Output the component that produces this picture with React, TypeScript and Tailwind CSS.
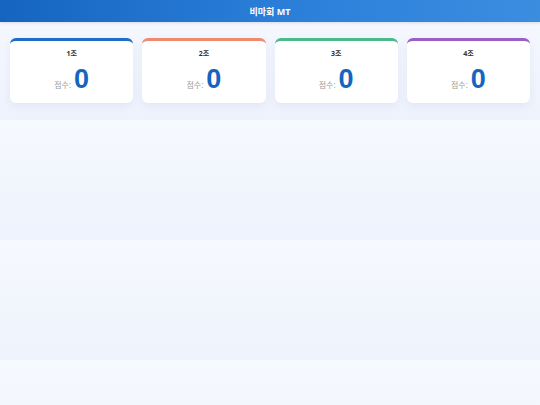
import React from "react";

const teams = [
  { name: "1조", border: "border-t-[#1e6ec8]" },
  { name: "2조", border: "border-t-[#ef8a6f]" },
  { name: "3조", border: "border-t-[#4cb98a]" },
  { name: "4조", border: "border-t-[#9a5fc2]" },
];

export default function App() {
  return (
    <div
      className="min-h-[405px] w-full bg-[linear-gradient(180deg,#f6f9fe_0%,#eef2fc_100%)] bg-[length:100%_120px] bg-repeat-y"
      style={{ fontFamily: '"Noto Sans", "Noto Sans CJK KR", sans-serif' }}
    >
      <header className="h-[22px] flex items-center justify-center bg-[linear-gradient(90deg,#1565c0_0%,#2a7ed8_50%,#3b8de0_100%)] shadow-[0_1px_3px_rgba(0,0,0,0.12)]">
        <span className="text-white text-[9px] font-bold leading-none">비마회 MT</span>
      </header>
      <div className="grid grid-cols-4 gap-[9px] px-[10px] pt-[16px] pb-[17px]">
        {teams.map((t) => (
          <div
            key={t.name}
            className={`h-[65px] bg-white rounded-[6px] border-t-[3px] ${t.border} shadow-[0_3px_8px_rgba(60,90,180,0.08)] flex flex-col items-center`}
          >
            <div className="mt-[9px] text-[7px] font-bold text-[#333] leading-none">{t.name}</div>
            <div className="mt-[9px] flex items-end gap-[3px]">
              <span className="text-[8px] text-[#9a9a9a] mb-[4px] leading-none">점수:</span>
              <span
                className="text-[27px] font-bold text-[#1565c0] leading-none"
                style={{ fontFamily: '"Liberation Sans", Arial, sans-serif' }}
              >
                0
              </span>
            </div>
          </div>
        ))}
      </div>
    </div>
  );
}
